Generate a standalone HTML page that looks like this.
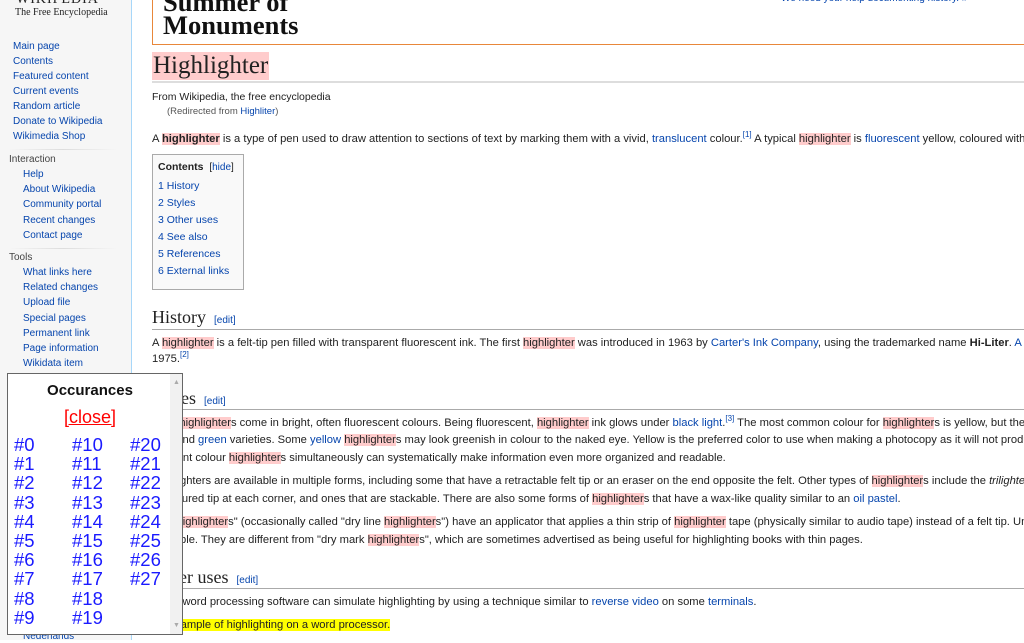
<!DOCTYPE html>
<html><head><meta charset="utf-8"><style>
*{margin:0;padding:0;box-sizing:border-box}
body{width:1024px;height:640px;overflow:hidden;background:#fff;font-family:"Liberation Sans",Arial,sans-serif;color:#222;position:relative}
a,.l{color:#0645ad;text-decoration:none}
#side{position:absolute;left:0;top:0;width:132px;height:640px;background:#f6f6f6;border-right:1px solid #a7d7f9}
.s{position:absolute;font-size:10px;color:#0645ad;white-space:nowrap;line-height:12px}
.sh{position:absolute;font-size:10px;color:#444;line-height:12px}
.sep{position:absolute;left:9px;width:108px;height:1px;background:linear-gradient(90deg,#f6f6f6,#ddd,#f6f6f6)}
.t{position:absolute;left:152px;white-space:nowrap;font-size:11.2px;line-height:14px}
.h{background:#fcc}
.hb{background:#fcc;font-weight:bold}
.hd{position:absolute;left:152px;font-family:"Liberation Serif",Georgia,serif;font-size:18px;line-height:20px;white-space:nowrap}
.hd a{font-family:"Liberation Sans",sans-serif;font-size:10px;margin-left:8px}
.rule{position:absolute;left:152px;right:0;height:1px;background:#aaa}
sup{font-size:8px;vertical-align:5px;line-height:0}
#pop{position:absolute;left:7px;top:373px;width:176px;height:262px;background:#fff;border:1px solid #666}
#pop .sb{position:absolute;right:0;top:0;width:12px;height:100%;background:#f1f1f1}
.n{position:absolute;color:#1a1aff;font-size:18.5px;line-height:19px}
</style></head><body>
<div id="side">
<div style="position:absolute;left:16px;top:-8px;font-family:'Liberation Serif',serif;font-size:14px;letter-spacing:1px;color:#222">WIKIPEDIA</div>
<div style="position:absolute;left:15px;top:7px;font-family:'Liberation Serif',serif;font-size:10px;color:#222">The Free Encyclopedia</div>
<div class="s" style="left:13px;top:41px">Main page</div>
<div class="s" style="left:13px;top:56px">Contents</div>
<div class="s" style="left:13px;top:71px">Featured content</div>
<div class="s" style="left:13px;top:86px">Current events</div>
<div class="s" style="left:13px;top:101px">Random article</div>
<div class="s" style="left:13px;top:116px">Donate to Wikipedia</div>
<div class="s" style="left:13px;top:131px">Wikimedia Shop</div>
<div class="sep" style="top:149px"></div>
<div class="sh" style="left:9px;top:154px">Interaction</div>
<div class="s" style="left:23px;top:169px">Help</div>
<div class="s" style="left:23px;top:184px">About Wikipedia</div>
<div class="s" style="left:23px;top:199px">Community portal</div>
<div class="s" style="left:23px;top:215px">Recent changes</div>
<div class="s" style="left:23px;top:230px">Contact page</div>
<div class="sep" style="top:248px"></div>
<div class="sh" style="left:9px;top:252px">Tools</div>
<div class="s" style="left:23px;top:267px">What links here</div>
<div class="s" style="left:23px;top:282px">Related changes</div>
<div class="s" style="left:23px;top:297px">Upload file</div>
<div class="s" style="left:23px;top:313px">Special pages</div>
<div class="s" style="left:23px;top:328px">Permanent link</div>
<div class="s" style="left:23px;top:343px">Page information</div>
<div class="s" style="left:23px;top:358px">Wikidata item</div>
<div class="s" style="left:23px;top:631px">Nederlands</div>
</div>

<div style="position:absolute;left:152px;top:-10px;right:0;height:55px;border-left:1px solid #e8873a;border-bottom:1px solid #e8873a"></div>
<div style="position:absolute;left:163px;top:-9px;font-family:'Liberation Serif',serif;font-weight:bold;font-size:26.5px;line-height:23px;color:#111">Summer of<br>Monuments</div>
<div style="position:absolute;left:781px;top:-7px;font-size:10px;color:#0645ad;white-space:nowrap">We need your help documenting history. »</div>

<div style="position:absolute;left:152px;top:52px;font-family:'Liberation Serif',serif;font-size:25px;line-height:28px;background:#fcc;padding:0 1px">Highlighter</div>
<div style="position:absolute;left:152px;right:0;top:81px;height:2px;background:#ddd"></div>
<div class="t" style="top:90px;font-size:10.5px">From Wikipedia, the free encyclopedia</div>
<div class="t" style="top:105px;left:167px;font-size:9.5px;color:#555">(Redirected from <span class="l">Highliter</span>)</div>

<div class="t" style="top:132px">A <span class="hb">highlighter</span> is a type of pen used to draw attention to sections of text by marking them with a vivid, <a>translucent</a> colour.<sup class="l">[1]</sup> A typical <span class="h">highlighter</span> is <a>fluorescent</a> yellow, coloured with</div>

<div style="position:absolute;left:152px;top:154px;width:92px;height:136px;background:#f9f9f9;border:1px solid #aaa"></div>
<div class="t" style="left:158px;top:160px;font-size:10.5px"><b>Contents</b> &nbsp;<span style="font-size:10px">[<a>hide</a>]</span></div>
<div class="t l" style="left:158px;top:179px;font-size:10.5px">1 History</div>
<div class="t l" style="left:158px;top:196px;font-size:10.5px">2 Styles</div>
<div class="t l" style="left:158px;top:213px;font-size:10.5px">3 Other uses</div>
<div class="t l" style="left:158px;top:230px;font-size:10.5px">4 See also</div>
<div class="t l" style="left:158px;top:247px;font-size:10.5px">5 References</div>
<div class="t l" style="left:158px;top:264px;font-size:10.5px">6 External links</div>

<div class="hd" style="top:307px">History<a>[edit]</a></div>
<div class="rule" style="top:329px"></div>
<div class="t" style="top:336px">A <span class="h">highlighter</span> is a felt-tip pen filled with transparent fluorescent ink. The first <span class="h">highlighter</span> was introduced in 1963 by <a>Carter's Ink Company</a>, using the trademarked name <b>Hi-Liter</b>. <a>A</a></div>
<div class="t" style="top:352px">1975.<sup class="l">[2]</sup></div>

<div class="hd" style="top:388px">Styles<a>[edit]</a></div>
<div class="rule" style="top:409px"></div>
<div class="t" style="top:416px">Most <span class="h">highlighter</span>s come in bright, often fluorescent colours. Being fluorescent, <span class="h">highlighter</span> ink glows under <a>black light</a>.<sup class="l">[3]</sup> The most common colour for <span class="h">highlighter</span>s is yellow, but they</div>
<div class="t" style="top:433px">blue and <a>green</a> varieties. Some <a>yellow</a> <span class="h">highlighter</span>s may look greenish in colour to the naked eye. Yellow is the preferred color to use when making a photocopy as it will not produce</div>
<div class="t" style="top:451px">different colour <span class="h">highlighter</span>s simultaneously can systematically make information even more organized and readable.</div>
<div class="t" style="top:474px">Highlighters are available in multiple forms, including some that have a retractable felt tip or an eraser on the end opposite the felt. Other types of <span class="h">highlighter</span>s include the <i>trilighter</i></div>
<div class="t" style="top:492px">a coloured tip at each corner, and ones that are stackable. There are also some forms of <span class="h">highlighter</span>s that have a wax-like quality similar to an <a>oil pastel</a>.</div>
<div class="t" style="top:515px">"Dry <span class="h">highlighter</span>s" (occasionally called "dry line <span class="h">highlighter</span>s") have an applicator that applies a thin strip of <span class="h">highlighter</span> tape (physically similar to audio tape) instead of a felt tip. Un</div>
<div class="t" style="top:533px">erasable. They are different from "dry mark <span class="h">highlighter</span>s", which are sometimes advertised as being useful for highlighting books with thin pages.</div>

<div class="hd" style="top:567px">Other uses<a>[edit]</a></div>
<div class="rule" style="top:588px"></div>
<div class="t" style="top:595px">Many word processing software can simulate highlighting by using a technique similar to <a>reverse video</a> on some <a>terminals</a>.</div>
<div class="t" style="top:618px"><span style="background:#ff0">An example of highlighting on a word processor.</span></div>

<div id="pop">
<div class="sb"><div style="position:absolute;left:3px;top:5px;font-size:7px;color:#aaa">▲</div><div style="position:absolute;left:3px;bottom:5px;font-size:7px;color:#aaa">▼</div></div>
<div style="position:absolute;left:0;width:164px;top:8px;text-align:center;font-weight:bold;font-size:15px;color:#111">Occurances</div>
<div style="position:absolute;left:0;width:164px;top:33px;text-align:center;font-size:18px;color:#f00;text-decoration:underline">[close]</div>
<div class="n" style="left:6px;top:61px;line-height:19.2px">#0<br>#1<br>#2<br>#3<br>#4<br>#5<br>#6<br>#7<br>#8<br>#9</div>
<div class="n" style="left:64px;top:61px;line-height:19.2px">#10<br>#11<br>#12<br>#13<br>#14<br>#15<br>#16<br>#17<br>#18<br>#19</div>
<div class="n" style="left:122px;top:61px;line-height:19.2px">#20<br>#21<br>#22<br>#23<br>#24<br>#25<br>#26<br>#27</div>
</div>
</body></html>
